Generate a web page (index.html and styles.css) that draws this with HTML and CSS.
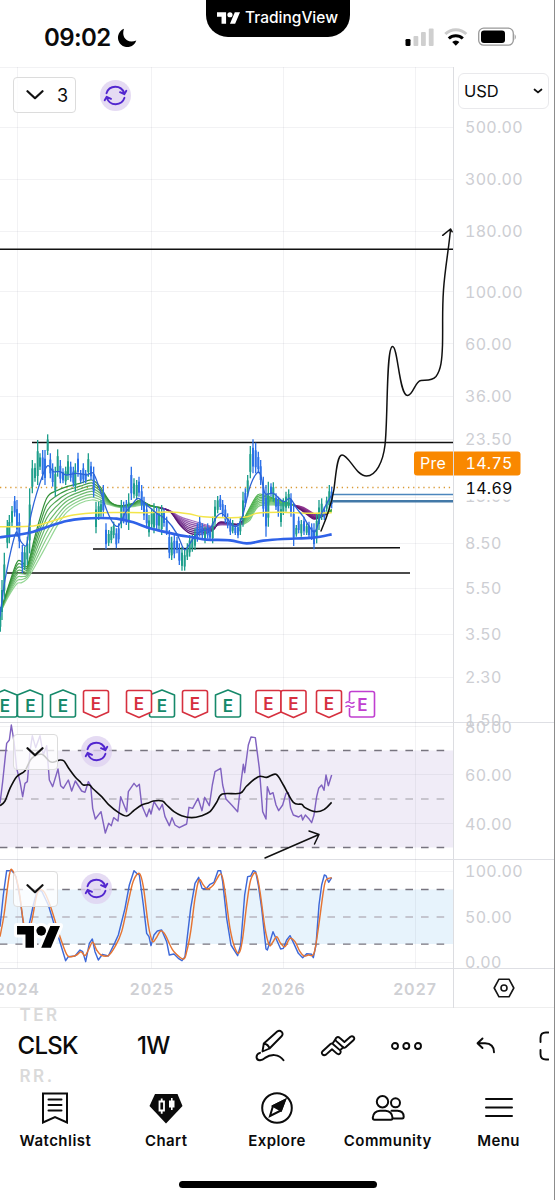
FILE: index.html
```html
<!DOCTYPE html>
<html lang="en">
<head>
    <meta charset="UTF-8">
    <meta name="viewport" content="width=device-width, initial-scale=1.0">
    <title>CLSK 1W - TradingView</title>
    <link rel="stylesheet" href="styles.css">
</head>
<body>
    <!-- shared icons -->
    <svg class="defs" width="0" height="0">
        <symbol id="tv-logo" viewBox="0 4 35.5 18">
            <path d="M14 22H7V11H0V4h14v18ZM28 22h-8l7.5-18h8L28 22Z"/>
            <circle cx="20" cy="8" r="4"/>
        </symbol>
        <symbol id="sync" viewBox="0 0 31 31">
            <path d="M6.500 13.200a9.300 9.300 0 0 1 17.600-.2M24.500 17.800a9.300 9.300 0 0 1-17.600.2M20 12.200l4.300 2 2-3.400M11 18.800l-4.300-2-2 3.400" fill="none" stroke="#5226cf" stroke-width="1.900" stroke-linecap="round" stroke-linejoin="round"/>
        </symbol>
        <symbol id="chevron" viewBox="0 0 18 12">
            <path d="M1.500 2.200 9 9.200l7.500-7" fill="none" stroke="#111" stroke-width="2.200" stroke-linecap="round" stroke-linejoin="round"/>
        </symbol>
        <g id="beat"><path d="M-12.500-8.500 0-13.500 12.500-8.500V11.500q0 2-2 2H-10.500q-2 0-2-2Z"/></g>
        <g id="miss"><path d="M-12.500-11.500q0-2 2-2H10.500q2 0 2 2V8L0 13.500-12.500 8Z"/></g>
    </svg>

    <header class="status-bar">
        <div class="clock">
            <span>09:02</span>
            <svg width="20" height="20" viewBox="0 0 20 20"><path d="M7 .8A9.400 9.400 0 1 0 19.300 12.500Q14 14.800 10 12.200 4.500 8.500 7 .8Z"/></svg>
        </div>
        <div class="island">
            <svg width="23" height="12"><use href="#tv-logo" fill="#fff"/></svg>
            <span>TradingView</span>
        </div>
        <div class="signals">
            <svg width="112" height="20" viewBox="404 27 112 20">
                <rect x="405.500" y="39" width="5" height="7" rx="1.300"/>
                <g fill="#cfcfcf">
                    <rect x="413.500" y="36" width="4.800" height="10" rx="1"/>
                    <rect x="421" y="32" width="4.800" height="14" rx="1"/>
                    <rect x="428.800" y="28.500" width="4.800" height="17.500" rx="1"/>
                </g>
                <path d="M445.300 34a15 15 0 0 1 21 0" fill="none" stroke="#ccc" stroke-width="3"/>
                <path d="M448.800 38.500a10 10 0 0 1 14 0" fill="none" stroke="#000" stroke-width="3"/>
                <path d="M452.200 42a5 5 0 0 1 7.200 0l-3.600 3.700Z"/>
                <rect x="478.700" y="28.200" width="34.600" height="17" rx="5" fill="none" stroke="#999" stroke-width="1.300"/>
                <rect x="481" y="30.500" width="24" height="12.500" rx="3"/>
                <path d="M514.700 34v6q2-3 0-6Z" fill="#888"/>
            </svg>
        </div>
    </header>

    <main class="chart">
        <section class="pane pane-price">
            <svg width="453" height="655" viewBox="0 67 453 655">
                <path class="grid" d="M0 67.500H453M0 127.500H453M0 179.500H453M0 231.500H453M0 291.500H453M0 343.500H453M0 396.500H453M0 439.500H453M0 497.500H453M0 543.500H453M0 588.500H453M0 634.500H453M0 677.500H453M17.500 67V722M151.500 67V722M283.500 67V722M415.500 67V722"/>
                <path d="M0 487.500H453" stroke="#d99a35" stroke-width="1.300" stroke-dasharray="1.300 3.800"/>
                <path class="level" d="M0 249.200H453M32 442.500H453M93 549 400 547.700M7 573H410"/>
                <g transform="translate(0 420) scale(.33333)">
                    <g id="ribbon"></g>
                    <g id="candles"></g>
                    <g id="averages"></g>
                </g>
                <path d="M332 494.500H453" stroke="#4c86bd" stroke-width="1.300"/>
                <path d="M332 501.200H453" stroke="#4379a8" stroke-width="2.600"/>
                <path class="sketch" d="M321 531C327 517 332 502 334 489 336 474 337 455 342 455 349 455 356 476 366.500 476 376 476 383 462 385 445 388 420 386 347 392.500 346.500 398 346 399 395.500 407.500 395.500 413 395.500 415 381 421 380.500 427 380 432 381 436 376.500 441 370 442 360 442.500 345 443 325 442 312 443.500 290 445 268 449 248 450.500 229M442.700 235.300 450.500 229l1.700 2.800"/>

                <!-- earnings marks -->
                <g class="marks">
                    <g class="up"><use href="#beat" x="30" y="703.500"/><use href="#beat" x="4.500" y="703.500"/><use href="#beat" x="63" y="703.500"/><use href="#beat" x="162" y="703.500"/><use href="#beat" x="228" y="703.500"/></g>
                    <g class="down"><use href="#miss" x="96" y="704"/><use href="#miss" x="139" y="704"/><use href="#miss" x="195" y="704"/><use href="#miss" x="268.500" y="704"/><use href="#miss" x="293.500" y="704"/><use href="#miss" x="329" y="704"/></g>
                    <rect class="next" x="349.500" y="691.500" width="25" height="25.500" rx="2"/>
                    <path d="M345 701h10v7H345Z" fill="#fff"/>
                    <path d="M345.500 703q2.300-2.300 4.500-.5t4.500-.5M345.500 707q2.300-2.300 4.500-.5t4.500-.5" fill="none" stroke="#c03fd0" stroke-width="1.300"/>
                </g>
                <g class="mark-text">
                    <g fill="#16896a"><text x="5" y="711.500">E</text><text x="30.500" y="711.500">E</text><text x="63" y="711.500">E</text><text x="162" y="711.500">E</text><text x="228" y="711.500">E</text></g>
                    <g fill="#d6303f"><text x="96" y="709.500">E</text><text x="139" y="709.500">E</text><text x="195" y="709.500">E</text><text x="268.500" y="709.500">E</text><text x="293.500" y="709.500">E</text><text x="329" y="709.500">E</text></g>
                    <text x="362.500" y="710.500" fill="#c03fd0">E</text>
                </g>
                <path d="M417 451.500H453V475.500H417q-3 0-3-3V454.500q0-3 3-3Z" fill="#f98800"/>
                <text class="tag" x="420" y="469.300">Pre</text>
            </svg>
            <div class="collapse collapse-wide">
                <svg width="18" height="12"><use href="#chevron"/></svg>
                <span>3</span>
            </div>
            <div class="sync sync-price"><svg width="31" height="31"><use href="#sync"/></svg></div>
        </section>

        <section class="pane pane-rsi">
            <svg width="453" height="137" viewBox="0 722 453 137">
                <rect y="750.500" width="453" height="97" fill="#f0ecf7"/>
                <path class="grid" d="M0 726.500H453M0 774.500H453M0 823.500H453M17.500 722V859M151.500 722V859M283.500 722V859M415.500 722V859"/>
                <path class="band" d="M-.2 750.500H448M-.2 847.500H448"/>
                <path class="band mid" d="M-.2 799H448"/>
                <g id="rsi" transform="translate(0 715) scale(.33333)"></g>
                <path class="sketch" d="M265 858 319 834.500M309 831l10 3.500-4.500 9.500"/>
            </svg>
            <div class="collapse"><svg width="18" height="12"><use href="#chevron"/></svg></div>
            <div class="sync"><svg width="31" height="31"><use href="#sync"/></svg></div>
        </section>

        <section class="pane pane-stoch">
            <svg width="453" height="109" viewBox="0 859 453 109">
                <rect y="889.500" width="453" height="54.500" fill="#e7f3fc"/>
                <path class="grid" d="M0 871.500H453M0 962.500H453M17.500 859V968M151.500 859V968M283.500 859V968M415.500 859V968"/>
                <path class="band" d="M-.2 889.500H448M-.2 944.200H448"/>
                <path class="band mid" d="M-.2 917H448"/>
                <g id="stoch" transform="translate(0 855) scale(.33333)"></g>
            </svg>
            <div class="collapse"><svg width="18" height="12"><use href="#chevron"/></svg></div>
            <div class="sync"><svg width="31" height="31"><use href="#sync"/></svg></div>
            <svg class="watermark" width="49" height="30" viewBox="-2.500 1.500 40.500 24.800">
                <g stroke="#fff" stroke-width="5" stroke-linejoin="round"><path d="M14 22H7V11H0V4h14v18ZM28 22h-8l7.500-18h8L28 22Z"/><circle cx="20" cy="8" r="4"/></g>
                <path d="M14 22H7V11H0V4h14v18ZM28 22h-8l7.500-18h8L28 22Z"/><circle cx="20" cy="8" r="4"/>
            </svg>
        </section>

        <section class="time-axis">
            <svg width="453" height="40" viewBox="0 968 453 40">
                <text x="17.500" y="994.500">2024</text>
                <text x="152" y="994.500">2025</text>
                <text x="283.500" y="994.500">2026</text>
                <text x="415" y="994.500">2027</text>
            </svg>
        </section>

        <aside class="price-axis">
            <svg width="101" height="901" viewBox="453 67 101 901">
                <path class="split" d="M453 722.500H554M453 859.500H554"/>
                <g class="tick">
                    <text x="465" y="133">500.00</text>
                    <text x="465" y="185">300.00</text>
                    <text x="465" y="237">180.00</text>
                    <text x="465" y="297.500">100.00</text>
                    <text x="465" y="349.500">60.00</text>
                    <text x="465" y="402">36.00</text>
                    <text x="465" y="445.300">23.50</text>
                    <text x="465" y="502.300">13.50</text>
                    <text x="465" y="549.300">8.50</text>
                    <text x="465" y="594">5.50</text>
                    <text x="465" y="640">3.50</text>
                    <text x="465" y="683">2.30</text>
                    <text x="465" y="726">1.50</text>
                    <text x="465" y="732.500">80.00</text>
                    <text x="465" y="780.800">60.00</text>
                    <text x="465" y="829.500">40.00</text>
                    <text x="465" y="876.800">100.00</text>
                    <text x="465" y="922.500">50.00</text>
                    <text x="465" y="967.500">0.00</text>
                </g>
                <rect x="460" y="477" width="65" height="22.500" fill="#fff"/>
                <path d="M454 451.500H517.500q3 0 3 3V472.500q0 3-3 3H454Z" fill="#f98800"/>
                <text class="tag" x="465.500" y="469.300">14.75</text>
                <text class="tag last" x="465.500" y="493.800">14.69</text>
            </svg>
            <div class="currency">
                <span>USD</span>
                <svg width="10" height="7" viewBox="0 0 10 7"><path d="M1.500 1.500 5 4.500l3.500-3" fill="none" stroke="#111" stroke-width="1.700" stroke-linecap="round"/></svg>
            </div>
        </aside>
        <div class="axis-settings">
            <svg width="22" height="20" viewBox="0 0 22 20" fill="none" stroke="#151515" stroke-width="1.600" stroke-linejoin="round"><path d="M6 1.200H16L20.800 10 16 18.800H6L1.200 10Z"/><circle cx="11" cy="10" r="3"/></svg>
        </div>
    </main>

    <div class="toolbar">
        <div class="symbol">
            <span class="ghost">TER</span>
            <span class="ticker">CLSK</span>
            <span class="ghost">RR.</span>
        </div>
        <span class="interval">1W</span>
        <div class="tools">
            <svg width="30" height="34" viewBox="0 0 30 34"><path d="M7.500 22.500 8.800 14.500 22.200 2.500q2.200-1.600 4.300.2 2 2 .3 4.300L14.500 19.500ZM8.800 14.500q4.500.8 5.700 5M5 23.800Q1.500 25 1.500 28.200q.3 3.200 3.500 3 2.500-.4 5-2.300 4.500-3.100 9.500-2.800 6 .6 9 5.200"/></svg>
            <svg width="36" height="24" viewBox="0 0 36 24"><path d="M2.600 17.200 10.500 10q1.500-1 2.600.2l6.800 5.900q1.500 1.700.2 3.200-1.500 1.600-3.200.3L12 15.300 6 20.600q-2 1.300-3.500-.1-1.400-1.700.1-3.300ZM12.500 9.700 16.300 3.700q1.700-1.500 3.300 0l4.800 4.300 6-5.300q1.800-1.200 3.300.3 1.300 1.700-.3 3.200l-7.800 7q-1.300 1-2.500 0L16.300 7.100q-1.500-1.700 0-3.400M20.200 16 23.500 13.300"/></svg>
            <svg width="32" height="10" viewBox="0 0 32 10"><circle cx="4" cy="5" r="3"/><circle cx="15.300" cy="5" r="3"/><circle cx="27" cy="5" r="3"/></svg>
        </div>
        <div class="history">
            <svg width="20" height="18" viewBox="0 0 20 18"><path d="M6.500 1.500 1.500 6.200l5 4.800M1.800 6.200H9q9 .3 9 9"/></svg>
            <svg width="10" height="30" viewBox="0 0 10 30"><path d="M9.500 1.500H7Q1.500 1.500 1.500 7v4M1.500 19v4q0 5.500 5.500 5.500h2.500"/></svg>
        </div>
    </div>

    <nav class="tabs">
        <a class="tab">
            <svg width="34" height="32" viewBox="0 0 34 32" class="line"><path d="M5 1.500H29V30.500L17 25 5 30.500ZM10.500 7.500H23.500M10.500 13H23.500M10.500 18.500H23.500"/></svg>
            <span>Watchlist</span>
        </a>
        <a class="tab">
            <svg width="34" height="32" viewBox="0 0 34 32"><path d="M6 2H28.500L33.500 14 17 31.500.5 14Z" fill="#0b0b0b"/><path d="M10.500 9.500H15V18.500H10.500ZM12.700 6.500v3M12.700 18.500v3.300" fill="none" stroke="#fff" stroke-width="1.800"/><path d="M20 8.500h5.500v7H20ZM22 6h1.600v12H22Z" fill="#fff"/></svg>
            <span>Chart</span>
        </a>
        <a class="tab">
            <svg width="34" height="32" viewBox="0 0 34 32" class="line"><circle cx="17" cy="16" r="14.800"/><path d="M25 8 21 18.500 10 24 13 14Z"/><path d="M25 8 21 18.500 13 14Z" fill="#0b0b0b"/></svg>
            <span>Explore</span>
        </a>
        <a class="tab">
            <svg width="34" height="32" viewBox="0 0 34 32" class="line"><circle cx="11.500" cy="9.700" r="5.700"/><circle cx="24.500" cy="10.800" r="4.500"/><path d="M9 18.700h5.500q6.500.5 7 7 0 2-1.500 2H3.500q-1.700 0-1.700-2 .5-6.500 7.200-7ZM20.500 18.700h6q6 .3 6.200 5.800 0 2-1.500 2h-9.500"/></svg>
            <span>Community</span>
        </a>
        <a class="tab">
            <svg width="34" height="32" viewBox="0 0 34 32" class="line"><path d="M4 7H30M4 15.500H30M4 24H30"/></svg>
            <span>Menu</span>
        </a>
    </nav>
    <div class="home-indicator"></div>

    <script src="chart.js"></script>
</body>
</html>
```
FILE: styles.css
```css
* {
    box-sizing: border-box;
}
body {
    margin: 0;
    width: 555px;
    height: 1200px;
    overflow: hidden;
    display: flex;
    flex-direction: column;
    background: #fff;
    border-right: 1px solid #8c8c8c;
    font-family: Inter, "Liberation Sans", sans-serif;
    color: #0b0b0b;
}
svg {
    display: block;
    flex: none;
}
.defs {
    position: absolute;
}

/* status bar */
.status-bar {
    height: 67px;
    display: grid;
    grid-template-columns: 205.5px 144px 1fr;
}
.clock {
    display: flex;
    align-items: center;
    gap: 6px;
    padding: 8px 0 0 44px;
    font-size: 24px;
    font-weight: 600;
    letter-spacing: -0.6px;
}
.island {
    height: 37px;
    display: flex;
    align-items: center;
    gap: 5px;
    padding: 0 0 2px 11.5px;
    background: #000;
    color: #fff;
    border-radius: 0 0 22px 22px;
    font-size: 15.5px;
    font-weight: 500;
}
.signals {
    padding: 27px 0 0 54.5px;
}

/* chart */
.chart {
    height: 941px;
    display: grid;
    grid-template-columns: 453px 1fr;
    grid-template-rows: 655px 137px 109px 40px;
    border-bottom: 1px solid #eee;
}
.pane {
    position: relative;
    grid-column: 1;
}
.price-axis {
    position: relative;
    grid-column: 2;
    grid-row: 1 / 4;
    border-left: 1px solid #dcdde1;
}
.price-axis > svg {
    margin-left: -1px;
}
.pane-rsi,
.pane-stoch,
.time-axis,
.axis-settings {
    box-shadow: inset 0 1px #dedfe4;
}
.axis-settings {
    display: flex;
    align-items: center;
    justify-content: center;
    border-left: 1px solid #dcdde1;
}
.grid {
    fill: none;
    stroke: #8a8a9a;
    stroke-opacity: 0.11;
}
.split {
    stroke: #dedfe4;
}
.level {
    stroke: #111;
    stroke-width: 1.5;
}
.sketch {
    fill: none;
    stroke: #111;
    stroke-width: 1.5;
    stroke-linecap: round;
    stroke-linejoin: round;
}
.band {
    stroke: #77747f;
    stroke-width: 1.3;
    stroke-dasharray: 7.6 8;
}
.band.mid {
    stroke: #b9b7c0;
}
.marks {
    fill: #fff;
    stroke-width: 1.6;
    stroke-linejoin: round;
}
.marks .up {
    stroke: #16896a;
}
.marks .down {
    stroke: #d6303f;
}
.marks .next {
    stroke: #c03fd0;
}
.mark-text {
    font-size: 17px;
    font-weight: 600;
    text-anchor: middle;
}
.tick,
.tag {
    font-size: 16px;
    letter-spacing: 0.3px;
    font-variant-numeric: tabular-nums;
}
.tick {
    fill: #cdced3;
}
.tag {
    fill: #fff;
}
.tag.last {
    fill: #0b0b0b;
}
.time-axis text {
    fill: #cfd0d4;
    font-size: 16px;
    font-weight: 600;
    letter-spacing: 1px;
    text-anchor: middle;
}

/* controls lying over the panes */
.collapse {
    position: absolute;
    left: 13px;
    top: 11.5px;
    width: 45px;
    height: 36px;
    display: flex;
    align-items: center;
    padding-left: 12px;
    gap: 13px;
    background: rgba(255, 255, 255, 0.78);
    border: 1px solid #dcdcdc;
    border-radius: 4px;
    font-size: 18px;
}
.collapse-wide {
    top: 10px;
    width: 63px;
}
.sync {
    position: absolute;
    left: 81px;
    top: 14px;
    width: 31px;
    height: 31px;
    border-radius: 50%;
    background: rgba(222, 210, 240, 0.8);
}
.sync-price {
    left: 99.5px;
    top: 13px;
}
.watermark {
    position: absolute;
    left: 14px;
    top: 64px;
}
.currency {
    position: absolute;
    left: 4px;
    top: 6px;
    width: 91px;
    height: 36px;
    display: flex;
    align-items: center;
    justify-content: space-between;
    padding: 0 5px;
    background: #fff;
    border: 1px solid #e9e9ec;
    border-radius: 6px;
    font-size: 16.5px;
}

/* bottom toolbar */
.toolbar {
    height: 75px;
    display: flex;
    align-items: center;
}
.symbol {
    width: 137px;
    height: 75px;
    padding-left: 17.5px;
    display: flex;
    flex-direction: column;
    justify-content: space-between;
    overflow: hidden;
}
.ghost {
    padding-left: 2px;
    color: #dadada;
    font-size: 17px;
    font-weight: 600;
    line-height: 14px;
    letter-spacing: 2.5px;
}
.ticker,
.interval {
    font-size: 24px;
    font-weight: 500;
    letter-spacing: -0.7px;
}
.interval {
    width: 118px;
}
.tools,
.history {
    display: flex;
    align-items: center;
    fill: none;
    stroke: #0b0b0b;
    stroke-width: 1.9;
    stroke-linecap: round;
    stroke-linejoin: round;
}
.tools {
    gap: 35px;
    width: 221px;
}
.history {
    gap: 43px;
}

/* tabs */
.tabs {
    height: 74px;
    display: grid;
    grid-template-columns: repeat(5, 110.8px);
    padding-top: 9px;
}
.tab {
    display: flex;
    flex-direction: column;
    align-items: center;
    gap: 7px;
    font-size: 15px;
    font-weight: 600;
    letter-spacing: 0.45px;
}
.line {
    fill: none;
    stroke: #0b0b0b;
    stroke-width: 2;
    stroke-linecap: round;
}
.home-indicator {
    width: 198px;
    height: 7px;
    margin: 24px 0 0 179px;
    border-radius: 4px;
    background: #000;
}
```
FILE: chart.js
```js
// All series use a plot grid of 3 units per pixel.
const NS = 'http://www.w3.org/2000/svg';

function addPath(parent, d, color, width) {
    const path = document.createElementNS(NS, 'path');
    path.setAttribute('d', d);
    path.setAttribute('fill', 'none');
    path.setAttribute('stroke', color);
    path.setAttribute('stroke-width', width);
    path.setAttribute('stroke-linejoin', 'round');
    document.getElementById(parent).appendChild(path);
}

function parse(text) {
    return text.trim().split(/\s*,\s*/).map(p => p.split(' ').map(Number));
}

function straight(points) {
    return 'M' + points.map(p => p.join(' ')).join('L');
}

// Catmull-Rom spline through the points
function smooth(points) {
    let d = 'M' + points[0].join(' ');
    for (let i = 0; i < points.length - 1; i++) {
        const a = points[i - 1] || points[i];
        const b = points[i];
        const c = points[i + 1];
        const e = points[i + 2] || c;
        d += `C${b[0] + (c[0] - a[0]) / 6} ${b[1] + (c[1] - a[1]) / 6} ${c[0] - (e[0] - b[0]) / 6} ${c[1] - (e[1] - b[1]) / 6} ${c[0]} ${c[1]}`;
    }
    return d;
}

// Candles: x high low direction
const candles = [
    [0, '1 560 635 u,6 480 600 u,13 398 540 u,22 300 385 u,28 285 370 u,36 258 320 u,44 228 290 d,51 240 350 d,58 280 385 d,67 375 460 d,74 380 450 u,82 350 435 u,89 205 400 u,97 120 220 u,105 130 185 u,113 60 195 u,120 100 150 u,128 90 180 d,135 90 195 d,143 43 105 u,151 100 175 d,158 130 200 d,166 140 230 u,173 88 170 u,181 120 190 d,189 145 190 d,197 140 195 u,204 105 180 u,212 125 185 d,220 140 200 d,226 130 215 u,234 98 170 d,242 150 190 d,250 130 190 d,257 150 190 d,265 100 170 u,273 125 180 d,281 140 232 d,288 245 340 u,296 245 300 u,303 240 290 u,310 195 290 d,318 310 388 d,326 330 378 u,334 320 370 u,341 305 355 u,349 325 385 d,356 310 370 d,364 240 325 u,371 245 310 d,379 240 315 d,386 220 330 u,394 140 240 d,402 175 235 u,410 180 240 u,417 170 230 d,425 195 270 d,432 230 300 d,440 250 325 d,447 285 350 u,455 265 325 u,462 250 340 u,470 260 330 d,477 265 330 u,485 255 345 u,492 265 320 d,500 290 345 d,508 330 415 d'],
    [510, '5 350 420 u,13 345 415 d,21 350 400 d,28 370 435 d,36 380 452 u,44 390 452 u,52 370 420 u,59 345 410 u,67 345 395 u,75 325 390 u,82 310 365 d,89 290 350 d,97 310 355 d,105 320 370 u,113 310 355 d,120 325 360 d,128 290 370 u,135 240 320 u,143 228 280 u,151 225 270 d,158 240 290 d,166 255 310 d,173 280 325 d,181 295 345 d,188 300 340 u,196 315 345 d,204 310 355 d,211 290 345 u,219 215 320 u,226 205 260 d,233 165 230 u,241 78 175 u,249 58 160 d,257 68 160 d,265 95 160 d,272 120 195 d,280 170 290 d,288 195 350 d,295 185 320 u,303 190 230 d,310 187 245 u,318 220 270 d,325 230 290 d,333 250 320 u,340 235 285 u,348 215 275 u,356 208 265 u,363 220 290 d,371 250 378 d,379 315 350 u,386 290 340 d,394 300 350 u,402 290 345 d,410 310 345 u,417 305 355 d,425 310 360 d,432 310 388 d,440 280 370 u,447 240 330 u,455 235 300 u,463 260 300 d,470 230 275 u,478 195 270 u,485 200 265 d']
];
candles.forEach(([offset, text]) => {
    text.split(',').forEach(bar => {
        const [x, high, low, dir] = bar.split(' ');
        const cx = offset + Number(x);
        const size = low - high;
        const color = dir === 'u' ? '#1f9f8c' : '#2d72e8';
        addPath('candles', `M${cx} ${high}V${low}`, color, 4);
        addPath('candles', `M${cx} ${Number(high) + size * 0.25}V${low - size * 0.2}`, color, 6);
    });
});

// Moving average ribbon: x fast slow
const ribbon = parse('0 580 580,25 500 530,50 428 492,65 425 488,80 440 478,90 410 465,110 330 430,140 235 375,170 212 320,200 200 277,240 190 250,275 180 240,300 200 245,330 245 255,360 257 262,400 250 260,420 240 256,450 256 258,480 264 262,510 275 272,540 315 290,570 340 300,610 342 312,640 330 320,660 306 315,710 313 315,730 300 313,750 262 300,765 235 272,780 222 257,820 235 255,850 244 258,880 254 255,910 275 262,940 297 280,960 292 286,980 282 280,995 268 275');
const parts = [
    [0, 480, [50, 145, 55], [150, 215, 150]],
    [480, 730, [90, 20, 115], [165, 110, 190]],
    [730, 880, [75, 175, 75], [130, 205, 130]],
    [880, 980, [100, 20, 110], [150, 60, 150]],
    [980, 995, [60, 160, 60], [120, 200, 100]]
];
for (let i = 7; i >= 0; i--) {
    const t = i / 7;
    parts.forEach(([from, to, dark, light]) => {
        const points = ribbon.filter(p => p[0] >= from && p[0] <= to).map(p => [p[0], p[1] + (p[2] - p[1]) * t]);
        const rgb = dark.map((c, k) => Math.round(c + (light[k] - c) * t));
        addPath('ribbon', smooth(points), `rgb(${rgb})`, 3.6);
    });
}

addPath('averages', smooth(parse('0 320,100 318,160 302,220 285,300 278,440 278,510 276,570 282,610 290,730 292,770 280,840 277,930 280,995 278')), '#f3e54a', 4.5);
addPath('averages', smooth(parse('0 352,50 345,100 335,150 318,200 303,250 296,300 294,350 296,400 307,450 325,500 337,540 346,580 352,620 359,690 361,740 370,790 362,850 357,940 353,995 343')), '#2f62e8', 8);
addPath('averages', smooth(parse('0 590,15 480,45 345,55 350,65 368,80 374,90 300,110 220,140 140,160 155,180 155,200 165,230 160,260 165,280 160,300 210,320 270,340 310,356 317,375 280,395 255,415 235,440 255,470 280,500 300,530 340,550 385,560 385,580 355,600 335,630 325,650 290,665 280,685 300,700 318,715 315,730 280,750 200,770 160,782 165,795 220,820 220,850 245,870 235,890 265,910 290,925 315,945 335,965 280,995 225')), '#2c63d6', 3.8);

addPath('rsi', straight(parse('0 265,8 200,20 85,28 75,34 30,42 80,50 160,60 200,68 245,75 205,82 200,90 110,97 62,107 98,120 62,130 120,140 92,148 195,158 215,174 162,182 212,190 220,205 195,215 228,226 198,245 228,255 232,265 200,272 212,278 280,286 312,303 290,316 354,326 325,334 332,341 308,354 318,362 245,380 290,385 230,402 205,410 215,418 208,425 270,440 305,448 282,453 297,462 260,478 285,487 268,495 305,508 332,516 308,525 330,538 338,560 327,567 277,578 280,594 250,606 287,614 247,628 272,637 210,645 170,662 160,668 210,678 252,695 270,713 290,722 210,730 148,734 173,745 90,753 66,766 68,778 160,788 290,798 312,802 215,810 238,819 233,828 270,836 287,848 270,858 235,865 233,872 280,880 300,896 306,904 300,908 315,916 300,928 313,935 323,942 300,950 245,956 220,965 210,972 226,978 180,985 212,995 180')), '#8062c0', 4.3);
addPath('rsi', smooth(parse('0 272,15 258,30 220,50 185,75 167,95 130,125 118,150 140,165 140,180 135,192 138,205 158,225 185,240 200,250 210,268 210,280 222,305 245,325 268,355 292,380 303,400 288,425 270,445 264,460 258,487 258,500 270,522 290,545 302,575 308,605 302,630 290,650 262,667 237,720 235,740 213,775 185,800 187,828 178,850 210,880 262,905 268,915 278,945 290,972 284,995 262')), '#0d0d0d', 4.8);

addPath('stoch', straight(parse('0 215,10 120,20 47,36 47,48 65,60 130,72 220,85 220,100 150,112 105,125 108,145 150,160 200,175 245,197 317,205 305,225 303,240 285,248 290,257 320,268 265,277 252,285 290,295 315,307 298,325 303,345 262,355 240,375 160,388 90,402 47,410 55,418 60,430 150,440 235,447 245,453 272,462 240,472 228,485 225,500 260,508 300,522 297,535 310,546 317,555 305,572 160,585 85,596 67,606 100,618 102,630 88,642 82,654 47,662 47,668 80,680 190,693 270,713 302,722 270,734 120,743 65,752 63,760 47,767 50,775 90,785 160,798 282,802 285,810 260,819 230,830 255,842 282,850 280,860 255,870 242,880 262,895 295,908 308,920 296,935 298,940 308,948 270,957 150,965 90,973 60,978 62,986 82,995 68')), '#3d68d8', 4.3);
addPath('stoch', smooth(parse('0 245,12 180,28 60,38 47,55 95,70 200,80 240,95 200,112 115,130 108,150 150,180 245,200 298,212 305,230 300,243 290,255 302,265 285,278 262,290 285,303 300,325 302,345 275,365 230,385 140,400 78,418 55,430 95,445 210,457 258,468 250,482 228,495 238,510 270,522 290,550 312,560 290,572 230,585 130,597 75,610 90,622 102,640 90,663 57,675 110,690 220,705 280,718 293,728 250,740 150,752 75,768 55,780 110,795 220,808 270,818 262,830 245,842 265,855 275,870 250,885 260,900 290,912 303,925 300,942 295,955 220,970 110,978 75,995 68')), '#e57432', 4.3);
```
